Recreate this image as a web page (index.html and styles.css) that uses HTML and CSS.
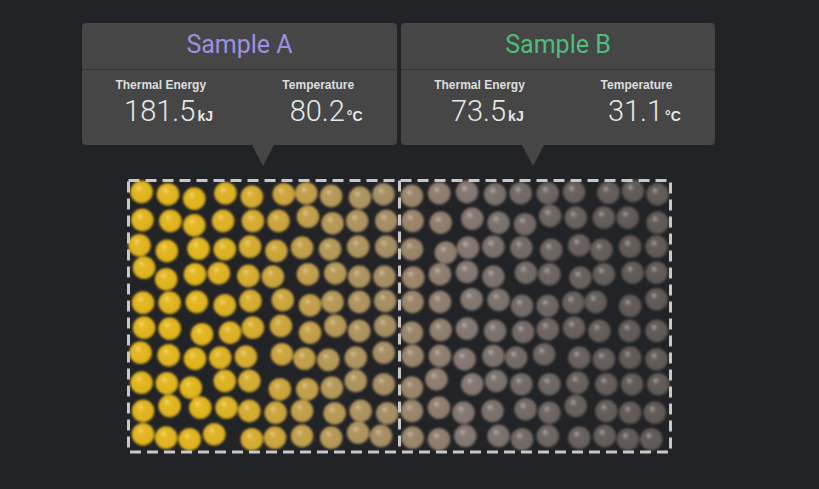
FILE: index.html
```html
<!DOCTYPE html>
<html lang="en">
<head>
<meta charset="utf-8">
<title>Samples</title>
<link rel="stylesheet" href="styles.css">
</head>
<body>
<div class="stage">
  <div class="cards">
    <div class="card card-a">
      <div class="card-head title-a">Sample A</div>
      <div class="card-body">
        <div class="stat">
          <div class="label">Thermal Energy</div>
          <div class="value">181.5<span class="unit">kJ</span></div>
        </div>
        <div class="stat">
          <div class="label">Temperature</div>
          <div class="value">80.2<span class="unit">°C</span></div>
        </div>
      </div>
      <span class="arrow"></span>
    </div>
    <div class="card card-b">
      <div class="card-head title-b">Sample B</div>
      <div class="card-body">
        <div class="stat">
          <div class="label">Thermal Energy</div>
          <div class="value">73.5<span class="unit">kJ</span></div>
        </div>
        <div class="stat">
          <div class="label">Temperature</div>
          <div class="value">31.1<span class="unit">°C</span></div>
        </div>
      </div>
      <span class="arrow"></span>
    </div>
  </div>

  <svg class="chamber" width="550" height="282" viewBox="125 176 550 282" xmlns="http://www.w3.org/2000/svg">
    <defs>
      <filter id="soft" x="-10%" y="-10%" width="120%" height="120%"><feGaussianBlur stdDeviation="0.9"/></filter>
      <radialGradient id="y1" cx="50%" cy="50%" r="50%" fx="36%" fy="30%"><stop offset="0" stop-color="#f3da7c"/><stop offset="0.32" stop-color="#e4b821"/><stop offset="0.85" stop-color="#dfb31f"/><stop offset="1" stop-color="#b8951c"/></radialGradient>
      <radialGradient id="y2" cx="50%" cy="50%" r="50%" fx="36%" fy="30%"><stop offset="0" stop-color="#efd582"/><stop offset="0.32" stop-color="#dfb427"/><stop offset="0.85" stop-color="#dab026"/><stop offset="1" stop-color="#b39022"/></radialGradient>
      <radialGradient id="y3" cx="50%" cy="50%" r="50%" fx="36%" fy="30%"><stop offset="0" stop-color="#ebd288"/><stop offset="0.32" stop-color="#d8af31"/><stop offset="0.85" stop-color="#d3aa30"/><stop offset="1" stop-color="#ad8c2a"/></radialGradient>
      <radialGradient id="y4" cx="50%" cy="50%" r="50%" fx="36%" fy="30%"><stop offset="0" stop-color="#e5cd90"/><stop offset="0.32" stop-color="#cea83f"/><stop offset="0.85" stop-color="#c9a33d"/><stop offset="1" stop-color="#a48536"/></radialGradient>
      <radialGradient id="y5" cx="50%" cy="50%" r="50%" fx="36%" fy="30%"><stop offset="0" stop-color="#e0c998"/><stop offset="0.32" stop-color="#c4a14d"/><stop offset="0.85" stop-color="#bf9d4b"/><stop offset="1" stop-color="#9c8041"/></radialGradient>
      <radialGradient id="y6" cx="50%" cy="50%" r="50%" fx="36%" fy="30%"><stop offset="0" stop-color="#dac6a0"/><stop offset="0.32" stop-color="#b99b59"/><stop offset="0.85" stop-color="#b49757"/><stop offset="1" stop-color="#937b4a"/></radialGradient>
      <radialGradient id="y7" cx="50%" cy="50%" r="50%" fx="36%" fy="30%"><stop offset="0" stop-color="#d5c4a6"/><stop offset="0.32" stop-color="#b19661"/><stop offset="0.85" stop-color="#ac925f"/><stop offset="1" stop-color="#8d7750"/></radialGradient>
      <radialGradient id="y8" cx="50%" cy="50%" r="50%" fx="36%" fy="30%"><stop offset="0" stop-color="#d0c1a8"/><stop offset="0.32" stop-color="#a99066"/><stop offset="0.85" stop-color="#a48c64"/><stop offset="1" stop-color="#877352"/></radialGradient>
      <radialGradient id="g1" cx="50%" cy="50%" r="50%" fx="36%" fy="30%"><stop offset="0" stop-color="#c8bdae"/><stop offset="0.32" stop-color="#9d886c"/><stop offset="0.85" stop-color="#988469"/><stop offset="1" stop-color="#7e6c57"/></radialGradient>
      <radialGradient id="g2" cx="50%" cy="50%" r="50%" fx="36%" fy="30%"><stop offset="0" stop-color="#c3b9b0"/><stop offset="0.32" stop-color="#928172"/><stop offset="0.85" stop-color="#8d7d6e"/><stop offset="1" stop-color="#76675b"/></radialGradient>
      <radialGradient id="g3" cx="50%" cy="50%" r="50%" fx="36%" fy="30%"><stop offset="0" stop-color="#bcb4b0"/><stop offset="0.32" stop-color="#877a74"/><stop offset="0.85" stop-color="#827670"/><stop offset="1" stop-color="#6c625d"/></radialGradient>
      <radialGradient id="g4" cx="50%" cy="50%" r="50%" fx="36%" fy="30%"><stop offset="0" stop-color="#b6b1ae"/><stop offset="0.32" stop-color="#7e746f"/><stop offset="0.85" stop-color="#79706b"/><stop offset="1" stop-color="#645d59"/></radialGradient>
      <radialGradient id="g5" cx="50%" cy="50%" r="50%" fx="36%" fy="30%"><stop offset="0" stop-color="#b3aeab"/><stop offset="0.32" stop-color="#766d69"/><stop offset="0.85" stop-color="#716965"/><stop offset="1" stop-color="#5e5754"/></radialGradient>
      <radialGradient id="g6" cx="50%" cy="50%" r="50%" fx="36%" fy="30%"><stop offset="0" stop-color="#b0aba8"/><stop offset="0.32" stop-color="#706864"/><stop offset="0.85" stop-color="#6b6460"/><stop offset="1" stop-color="#5a5350"/></radialGradient>
      <radialGradient id="g7" cx="50%" cy="50%" r="50%" fx="36%" fy="30%"><stop offset="0" stop-color="#ada8a6"/><stop offset="0.32" stop-color="#6b6360"/><stop offset="0.85" stop-color="#675f5c"/><stop offset="1" stop-color="#56504d"/></radialGradient>
      <radialGradient id="g8" cx="50%" cy="50%" r="50%" fx="36%" fy="30%"><stop offset="0" stop-color="#aba6a4"/><stop offset="0.32" stop-color="#67605d"/><stop offset="0.85" stop-color="#635c59"/><stop offset="1" stop-color="#534d4a"/></radialGradient>
      <radialGradient id="g9" cx="50%" cy="50%" r="50%" fx="36%" fy="30%"><stop offset="0" stop-color="#a9a4a2"/><stop offset="0.32" stop-color="#645d5a"/><stop offset="0.85" stop-color="#605956"/><stop offset="1" stop-color="#504a47"/></radialGradient>
    </defs>

    <g class="particles" filter="url(#soft)">
      <g fill="url(#y1)">
        <circle cx="141.6" cy="192" r="11.4"/><circle cx="142.4" cy="220" r="11.4"/><circle cx="139.5" cy="245.3" r="11.4"/><circle cx="144.1" cy="267.7" r="11.4"/><circle cx="143.1" cy="302.7" r="11.4"/><circle cx="144.1" cy="327.7" r="11.4"/><circle cx="140.6" cy="352.7" r="11.4"/><circle cx="141.6" cy="382.7" r="11.4"/><circle cx="143.1" cy="411" r="11.4"/><circle cx="143.1" cy="434.3" r="11.4"/>
        <circle cx="168" cy="194.3" r="11.4"/><circle cx="170.4" cy="221" r="11.4"/><circle cx="166.9" cy="251" r="11.4"/><circle cx="166.2" cy="279.3" r="11.4"/><circle cx="169.7" cy="302.7" r="11.4"/><circle cx="169.7" cy="328.7" r="11.4"/><circle cx="168.7" cy="355.3" r="11.4"/><circle cx="166.9" cy="383.3" r="11.4"/><circle cx="169.7" cy="406" r="11.4"/><circle cx="166.2" cy="437.7" r="11.4"/>
        <circle cx="194.3" cy="198.7" r="11.4"/><circle cx="194.3" cy="225.3" r="11.4"/><circle cx="198.5" cy="248.7" r="11.4"/><circle cx="195" cy="274.3" r="11.4"/><circle cx="196.8" cy="302" r="11.4"/><circle cx="202" cy="334.3" r="11.4"/><circle cx="195" cy="358.7" r="11.4"/><circle cx="190.8" cy="387.7" r="11.4"/><circle cx="200.3" cy="407.7" r="11.4"/><circle cx="189.7" cy="439.3" r="11.4"/>
      </g>
      <g fill="url(#y2)">
        <circle cx="225.5" cy="193.3" r="11.4"/><circle cx="223.1" cy="221" r="11.4"/><circle cx="224.8" cy="249.3" r="11.4"/><circle cx="218.9" cy="273.3" r="11.4"/><circle cx="224.8" cy="305.3" r="11.4"/><circle cx="230.1" cy="332.7" r="11.4"/><circle cx="220.3" cy="357.7" r="11.4"/><circle cx="224.8" cy="381" r="11.4"/><circle cx="226.6" cy="407.7" r="11.4"/><circle cx="214.3" cy="434.3" r="11.4"/>
      </g>
      <g fill="url(#y3)">
        <circle cx="251.9" cy="196.7" r="11.4"/><circle cx="252.9" cy="221" r="11.4"/><circle cx="250.1" cy="246.7" r="11.4"/><circle cx="248.4" cy="276" r="11.4"/><circle cx="250.5" cy="301" r="11.4"/><circle cx="252.9" cy="327.7" r="11.4"/><circle cx="245.9" cy="356.7" r="11.4"/><circle cx="249.4" cy="381" r="11.4"/><circle cx="249.4" cy="411" r="11.4"/><circle cx="251.9" cy="439.3" r="11.4"/>
      </g>
      <g fill="url(#y4)">
        <circle cx="283.8" cy="194.3" r="11.4"/><circle cx="278.5" cy="221" r="11.4"/><circle cx="276.4" cy="251" r="11.4"/><circle cx="272.9" cy="276.7" r="11.4"/><circle cx="282.8" cy="300" r="11.4"/><circle cx="281" cy="326" r="11.4"/><circle cx="282" cy="354.3" r="11.4"/><circle cx="279.9" cy="389.3" r="11.4"/><circle cx="275.7" cy="412.7" r="11.4"/><circle cx="275" cy="437.7" r="11.4"/>
      </g>
      <g fill="url(#y5)">
        <circle cx="306.3" cy="193.3" r="11.4"/><circle cx="308" cy="216.7" r="11.4"/><circle cx="302.1" cy="247.7" r="11.4"/><circle cx="308" cy="274.3" r="11.4"/><circle cx="310.1" cy="305.3" r="11.4"/><circle cx="310.1" cy="332.7" r="11.4"/><circle cx="304.5" cy="358.7" r="11.4"/><circle cx="307.3" cy="389.3" r="11.4"/><circle cx="302.1" cy="411" r="11.4"/><circle cx="302.1" cy="436" r="11.4"/>
      </g>
      <g fill="url(#y6)">
        <circle cx="331.2" cy="196" r="11.4"/><circle cx="332.6" cy="223.3" r="11.4"/><circle cx="330.1" cy="249.3" r="11.4"/><circle cx="335.4" cy="273.3" r="11.4"/><circle cx="332.6" cy="302" r="11.4"/><circle cx="335.4" cy="326" r="11.4"/><circle cx="328.4" cy="360" r="11.4"/><circle cx="331.9" cy="387.7" r="11.4"/><circle cx="334.7" cy="413.3" r="11.4"/><circle cx="331.2" cy="437.7" r="11.4"/>
      </g>
      <g fill="url(#y7)">
        <circle cx="360" cy="197.7" r="11.4"/><circle cx="357.2" cy="221" r="11.4"/><circle cx="358.2" cy="246.7" r="11.4"/><circle cx="359.3" cy="276.7" r="11.4"/><circle cx="359.3" cy="302" r="11.4"/><circle cx="359.3" cy="331" r="11.4"/><circle cx="355.8" cy="357.7" r="11.4"/><circle cx="355.8" cy="381" r="11.4"/><circle cx="360.7" cy="411" r="11.4"/><circle cx="358.2" cy="432.7" r="11.4"/>
      </g>
      <g fill="url(#y8)">
        <circle cx="383.5" cy="194.3" r="11.4"/><circle cx="386.3" cy="221" r="11.4"/><circle cx="386.3" cy="246.7" r="11.4"/><circle cx="384.5" cy="276.7" r="11.4"/><circle cx="385.2" cy="301" r="11.4"/><circle cx="385.2" cy="326" r="11.4"/><circle cx="383.8" cy="352.7" r="11.4"/><circle cx="383.8" cy="384.3" r="11.4"/><circle cx="387.3" cy="413.3" r="11.4"/><circle cx="381" cy="436" r="11.4"/>
      </g>
      <g fill="url(#g1)">
        <circle cx="411.9" cy="196" r="11.4"/><circle cx="412.6" cy="221" r="11.4"/><circle cx="411.9" cy="249.3" r="11.4"/><circle cx="413.3" cy="277.7" r="11.4"/><circle cx="412.6" cy="302" r="11.4"/><circle cx="411.9" cy="332.7" r="11.4"/><circle cx="412.6" cy="356" r="11.4"/><circle cx="411.9" cy="387.7" r="11.4"/><circle cx="411.9" cy="411" r="11.4"/><circle cx="412.6" cy="437.7" r="11.4"/>
      </g>
      <g fill="url(#g2)">
        <circle cx="439.3" cy="193.3" r="11.4"/><circle cx="440.7" cy="222.7" r="11.4"/><circle cx="445.9" cy="252.7" r="11.4"/><circle cx="440" cy="274.3" r="11.4"/><circle cx="440" cy="302" r="11.4"/><circle cx="440.7" cy="330" r="11.4"/><circle cx="440" cy="356" r="11.4"/><circle cx="436.5" cy="379.3" r="11.4"/><circle cx="439" cy="407.7" r="11.4"/><circle cx="439" cy="439.3" r="11.4"/>
      </g>
      <g fill="url(#g3)">
        <circle cx="467" cy="192" r="11.4"/><circle cx="472.3" cy="218.7" r="11.4"/><circle cx="468.1" cy="247.7" r="11.4"/><circle cx="467" cy="272" r="11.4"/><circle cx="471.6" cy="299.3" r="11.4"/><circle cx="467" cy="328.7" r="11.4"/><circle cx="464.6" cy="359.3" r="11.4"/><circle cx="472.3" cy="384.3" r="11.4"/><circle cx="463.5" cy="412.7" r="11.4"/><circle cx="465.3" cy="436" r="11.4"/>
      </g>
      <g fill="url(#g4)">
        <circle cx="495.1" cy="194.3" r="11.4"/><circle cx="498.6" cy="222.7" r="11.4"/><circle cx="493.4" cy="246.7" r="11.4"/><circle cx="493.4" cy="276.7" r="11.4"/><circle cx="498.6" cy="300" r="11.4"/><circle cx="495.1" cy="331" r="11.4"/><circle cx="493.4" cy="356" r="11.4"/><circle cx="496.2" cy="381" r="11.4"/><circle cx="492.6" cy="411" r="11.4"/><circle cx="498.6" cy="436" r="11.4"/>
      </g>
      <g fill="url(#g5)">
        <circle cx="520.7" cy="193.3" r="11.4"/><circle cx="525" cy="224.3" r="11.4"/><circle cx="521.4" cy="247.7" r="11.4"/><circle cx="526" cy="272.7" r="11.4"/><circle cx="522.1" cy="306" r="11.4"/><circle cx="523.2" cy="332" r="11.4"/><circle cx="516.2" cy="357.7" r="11.4"/><circle cx="521.4" cy="384.3" r="11.4"/><circle cx="525.6" cy="409.3" r="11.4"/><circle cx="522.1" cy="439.3" r="11.4"/>
      </g>
      <g fill="url(#g6)">
        <circle cx="547.8" cy="193.3" r="11.4"/><circle cx="550.2" cy="216" r="11.4"/><circle cx="551.3" cy="250" r="11.4"/><circle cx="549.5" cy="274.3" r="11.4"/><circle cx="547.8" cy="306" r="11.4"/><circle cx="547.8" cy="329.3" r="11.4"/><circle cx="544.2" cy="354.3" r="11.4"/><circle cx="549.5" cy="384.3" r="11.4"/><circle cx="549.5" cy="412.7" r="11.4"/><circle cx="547.8" cy="436" r="11.4"/>
      </g>
      <g fill="url(#g7)">
        <circle cx="574.1" cy="192" r="11.4"/><circle cx="575.8" cy="217.7" r="11.4"/><circle cx="579.3" cy="245.3" r="11.4"/><circle cx="580.4" cy="277.7" r="11.4"/><circle cx="573.4" cy="302.7" r="11.4"/><circle cx="574.1" cy="327.7" r="11.4"/><circle cx="579.3" cy="357.7" r="11.4"/><circle cx="577.6" cy="382.7" r="11.4"/><circle cx="575.8" cy="406" r="11.4"/><circle cx="579.3" cy="437.7" r="11.4"/>
      </g>
      <g fill="url(#g8)">
        <circle cx="608.5" cy="192.7" r="11.4"/><circle cx="603.9" cy="217.7" r="11.4"/><circle cx="601.5" cy="250" r="11.4"/><circle cx="603.9" cy="274.3" r="11.4"/><circle cx="595.8" cy="302" r="11.4"/><circle cx="599.4" cy="331" r="11.4"/><circle cx="603.9" cy="359.3" r="11.4"/><circle cx="606.4" cy="384.3" r="11.4"/><circle cx="606.4" cy="411" r="11.4"/><circle cx="604.7" cy="436" r="11.4"/>
      </g>
      <g fill="url(#g9)">
        <circle cx="633" cy="191" r="11.4"/><circle cx="627.8" cy="217.7" r="11.4"/><circle cx="630.2" cy="246.7" r="11.4"/><circle cx="632.7" cy="272.7" r="11.4"/><circle cx="630.2" cy="306" r="11.4"/><circle cx="629.5" cy="331" r="11.4"/><circle cx="630.2" cy="357.7" r="11.4"/><circle cx="632" cy="384.3" r="11.4"/><circle cx="630.2" cy="412.7" r="11.4"/><circle cx="627.9" cy="439.3" r="11.4"/>
        <circle cx="657.6" cy="194.3" r="11.4"/><circle cx="657.6" cy="222.7" r="11.4"/><circle cx="656.6" cy="246.7" r="11.4"/><circle cx="656.6" cy="272.7" r="11.4"/><circle cx="656.6" cy="299.3" r="11.4"/><circle cx="656.6" cy="331" r="11.4"/><circle cx="656.6" cy="359.3" r="11.4"/><circle cx="658.3" cy="384.3" r="11.4"/><circle cx="654.8" cy="412.7" r="11.4"/><circle cx="651.3" cy="439.3" r="11.4"/>
      </g>
    </g>

    <g class="walls">
      <rect x="128.5" y="180.5" width="542" height="271.5"/>
      <line x1="399.5" y1="180.5" x2="399.5" y2="452"/>
    </g>
  </svg>
</div>
</body>
</html>
```

FILE: styles.css
```css
html, body {
  margin: 0;
  padding: 0;
}

body {
  background: #222326;
  width: 819px;
  height: 489px;
  overflow: hidden;
  font-family: Roboto, "Liberation Sans", sans-serif;
  color: #e4e4e4;
}

.stage {
  padding: 23px 0 0 82px;
}

.cards {
  display: flex;
  gap: 4px;
}

.card {
  position: relative;
  background: #464646;
  border-radius: 4px;
}

.card-a { width: 315px; }
.card-b { width: 314px; }

.card-head {
  height: 46px;
  line-height: 43px;
  text-align: center;
  font-size: 25px;
  font-weight: 400;
  border-bottom: 1px solid #353535;
}

.title-a { color: #a08fe0; }
.title-b { color: #4dbf7b; }

.card-body {
  display: grid;
  grid-template-columns: 1fr 1fr;
  padding: 8px 0 20px;
}

.stat {
  text-align: center;
}

.label {
  font-family: "Liberation Sans", Arial, sans-serif;
  font-weight: 700;
  font-size: 12px;
  line-height: 14px;
  color: #dedede;
  margin-bottom: 5px;
}

.value {
  font-family: Roboto, sans-serif;
  font-weight: 300;
  font-size: 29px;
  line-height: 28px;
  color: #e8e8e8;
}

.unit {
  display: inline-block;
  width: 0;
  white-space: nowrap;
  text-align: left;
  padding-left: 2px;
  font-family: "Liberation Sans", Arial, sans-serif;
  font-weight: 700;
  font-size: 14px;
  line-height: 13px;
  color: #e8e8e8;
}

.arrow {
  position: absolute;
  top: 100%;
  width: 0;
  height: 0;
  border-left: 11.5px solid transparent;
  border-right: 11.5px solid transparent;
  border-top: 21px solid #464646;
}

.card-a .arrow { left: 170px; }
.card-b .arrow { left: 121px; }

.chamber {
  display: block;
  margin: 31px 0 0 43px;
}

.walls {
  fill: none;
  stroke: #c8c8c8;
  stroke-width: 3;
  stroke-dasharray: 11 6;
}
```
